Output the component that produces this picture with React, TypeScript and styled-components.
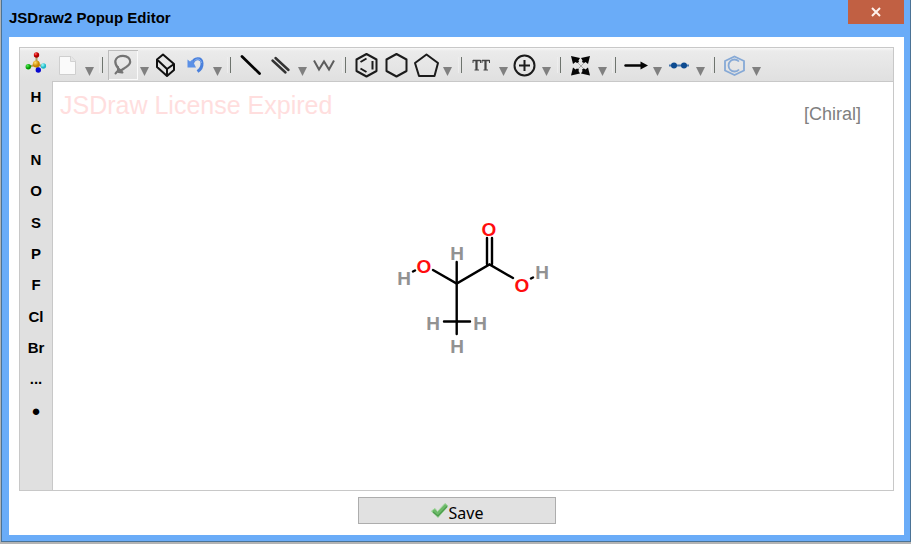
import React from 'react';
import styled, { createGlobalStyle } from 'styled-components';

const GlobalStyle = createGlobalStyle`
  * { box-sizing: border-box; }
  body { margin: 0; background: #b4b4b4; font-family: "Liberation Sans", Arial, sans-serif; }
  button { font: inherit; color: inherit; border: 0; padding: 0; background: none; cursor: pointer; }
`;

const Page = styled.div`
  display: flex;
  min-height: 100vh;
  padding: 0 0 2px 1px;
`;

const Dialog = styled.section`
  flex: 1;
  display: flex;
  flex-direction: column;
  padding: 0 6px 6px 7px;
  background: #6aacf8;
  border: 1px solid #4b7396;
  border-top: 0;
`;

const TitleBar = styled.header`
  display: flex;
  justify-content: space-between;
  align-items: flex-start;
  height: 37px;
`;

const Title = styled.h1`
  margin: 0;
  font-size: 15px;
  line-height: 36px;
  font-weight: bold;
  color: #000;
`;

const CloseButton = styled.button`
  display: grid;
  place-items: center;
  width: 56px;
  height: 24px;
  background: #c16043;
`;

const Body = styled.main`
  flex: 1;
  display: flex;
  flex-direction: column;
  align-items: center;
  gap: 6px;
  padding: 10px 10px 11px;
  background: #fff;
`;

const Editor = styled.div`
  flex: 1;
  align-self: stretch;
  display: flex;
  flex-direction: column;
  border: 1px solid #c8c8c8;
`;

const Toolbar = styled.div`
  display: flex;
  align-items: center;
  height: 33px;
  padding: 0 1px;
  background: linear-gradient(#f8f8f8 0, #ebebeb 3px, #e0e0e0 100%);
`;

const Tool = styled.button<{ $active?: boolean; $spaced?: boolean }>`
  display: block;
  flex: none;
  width: 30px;
  height: 30px;
  margin-right: ${p => (p.$spaced ? 2 : 0)}px;
  box-shadow: ${p => (p.$active ? 'inset 1px 1px #bdbdbd, inset -1px -1px #fafafa' : 'none')};
  svg { display: block; }
`;

const Caret = styled.button`
  display: grid;
  place-items: center;
  align-self: flex-end;
  flex: none;
  width: 13px;
  height: 19px;
  svg { display: block; }
`;

const Separator = styled.span<{ $wide?: boolean }>`
  flex: none;
  display: flex;
  justify-content: center;
  width: ${p => (p.$wide ? 13 : 12)}px;
  height: 16px;
  &::before {
    content: '';
    width: 2px;
    margin-right: 2px;
    border-left: 1px solid #ededed;
    border-right: 1px solid #6e746e;
  }
`;

const Workspace = styled.div`
  flex: 1;
  display: flex;
`;

const Elements = styled.nav`
  flex: none;
  width: 32px;
  background: #e0e0e0;
`;

const ElementGrid = styled.div`
  display: grid;
  grid-auto-rows: 1fr;
  height: 345px;
`;

const ElementButton = styled.button`
  font-size: 15px;
  font-weight: bold;
  color: #000;
`;

const Canvas = styled.div`
  position: relative;
  flex: 1;
  display: grid;
  place-items: center;
  border-top: 1px solid #c8c8c8;
  border-left: 1px solid #c8c8c8;
  background: #fff;
`;

const License = styled.div`
  position: absolute;
  left: 7px;
  top: 8px;
  font-size: 25px;
  line-height: 30px;
  color: #ffdede;
`;

const Chiral = styled.div`
  position: absolute;
  right: 32px;
  top: 21px;
  font-size: 18px;
  line-height: 22px;
  color: #808080;
`;

const Molecule = styled.svg`
  display: block;
  font-family: "Liberation Sans", Arial, sans-serif;
  font-size: 19px;
  font-weight: bold;
  text-anchor: middle;
`;

const SaveButton = styled.button`
  display: flex;
  justify-content: center;
  align-items: center;
  width: 198px;
  height: 27px;
  border: 1px solid #adadad;
  background: #e1e1e1;
  font-family: "Noto Sans", sans-serif;
  font-size: 16px;
  color: #000;
`;

const SaveLabel = styled.span`
  padding-top: 4px;
  line-height: 22px;
`;

const icons: Record<string, React.ReactNode> = {
  molecule: (
    <g>
      <defs>
        <radialGradient id="red" cx=".35" cy=".3"><stop offset="0" stopColor="#ff7777" /><stop offset=".6" stopColor="#d60808" /><stop offset="1" stopColor="#aa0000" /></radialGradient>
        <radialGradient id="gold" cx=".35" cy=".3"><stop offset="0" stopColor="#ffe070" /><stop offset="1" stopColor="#c88600" /></radialGradient>
        <radialGradient id="green" cx=".35" cy=".3"><stop offset="0" stopColor="#55ee55" /><stop offset="1" stopColor="#009a00" /></radialGradient>
        <radialGradient id="cyan" cx=".35" cy=".3"><stop offset="0" stopColor="#a0ffff" /><stop offset="1" stopColor="#20b8c8" /></radialGradient>
      </defs>
      <path d="M15.5 7V15M7.5 17L15 14.5L22 16M15.5 14.5L17 20" stroke="#b09a60" strokeWidth="2" />
      <circle cx="15.5" cy="5" r="2.7" fill="url(#red)" />
      <circle cx="7.3" cy="16.8" r="2.7" fill="url(#green)" />
      <circle cx="22.4" cy="16" r="2.7" fill="url(#cyan)" />
      <circle cx="15.3" cy="14" r="3.5" fill="url(#gold)" />
      <circle cx="17.3" cy="20" r="2.7" fill="#0808d0" />
    </g>
  ),
  page: (
    <g>
      <path d="M6.5 6.5H18L22.5 11V24.5H6.5Z" fill="#fafafa" stroke="#cfcfcf" strokeLinejoin="round" />
      <path d="M17.5 6.5V11.5H22.5" fill="#e7e7e7" stroke="#d2d2d2" />
    </g>
  ),
  lasso: (
    <g fill="none" stroke="#747474" strokeWidth="2.2" strokeLinecap="round" strokeLinejoin="round">
      <path d="M10 18C8.500 16 7 14 7.300 11C7.800 7.500 11.500 5.800 15 5.800C19.500 5.800 22.300 8.500 22.200 12C22 15.500 18.500 16.500 16 18.500C14 20 12.500 21 10.500 20.500" />
      <path d="M10 17V20.500L7.500 23.500M10.500 18.500L14.500 22.500M10.500 22L14 22.500" strokeWidth="2" />
    </g>
  ),
  eraser: (
    <g fill="none" stroke="#111" strokeWidth="2" strokeLinejoin="round">
      <path d="M6 9.500L12 4.500L23 14V20L16 26L6 17ZM6 9.500L16 19L23 14M16 19V26" />
    </g>
  ),
  undo: (
    <g>
      <path d="M11.500 13.500C13 7.500 20.500 7 21 13C21.300 17 19.500 19.500 16.500 21.500" fill="none" stroke="#4a80dc" strokeWidth="3" />
      <path d="M13 11.500C15 8 19.500 8 20.500 13" fill="none" stroke="#85aff0" strokeWidth="1" />
      <path d="M6.500 9.500L9 11.500L11.500 9.500L13 13.500L15 17.500H6.500Z" fill="#5b90e6" />
    </g>
  ),
  bond: <path d="M6 6.500L23.500 23.500" stroke="#050505" strokeWidth="2.800" strokeLinecap="round" />,
  doubleBond: <path d="M6.500 10.500L19.500 22.500M9.500 8L22.500 20" stroke="#333" strokeWidth="2.400" strokeLinecap="round" />,
  chain: <path d="M5 10.500L10 19.500L15 11.500L20 19.500L25 10.500" fill="none" stroke="#5d5d5d" strokeWidth="2" />,
  benzene: (
    <g fill="none" stroke="#1b1b1b" strokeWidth="2" strokeLinejoin="round">
      <path d="M15.500 4L25.500 9.500V21L15.500 26.500L5.500 21V9.500Z" />
      <path d="M21.500 11V19.500M9.500 12L15.500 8.500M9.500 18.500L15.500 22" />
    </g>
  ),
  hexagon: <path d="M15.500 4L25.500 9.500V21L15.500 26.500L5.500 21V9.500Z" fill="none" stroke="#1b1b1b" strokeWidth="2" strokeLinejoin="round" />,
  pentagon: <path d="M15.500 4.500L27 13L23.500 26H8L4 13Z" fill="none" stroke="#1b1b1b" strokeWidth="2" strokeLinejoin="round" />,
  text: (
    <g fill="none" stroke="#444">
      <path d="M6 10.500H13.500M15 10.500H22.500" strokeWidth="1.500" />
      <path d="M9.500 10V20M18.500 10V20" strokeWidth="2.200" />
      <path d="M6 10V13M13.500 10V13M15 10V13M22.500 10V13M7.500 20H12M16.500 20H21" strokeWidth="1" />
    </g>
  ),
  charge: (
    <g fill="none" stroke="#1b1b1b" strokeWidth="2">
      <circle cx="14.500" cy="15.500" r="10" />
      <path d="M9 15.500H20M14.500 10V21" />
    </g>
  ),
  expand: (
    <g>
      <path d="M8 9L22 23M22 9L8 23" stroke="#aaa" strokeWidth="1" />
      <path d="M5 6L14 8L12.500 10.500L13 12L11 13L9.500 12L7 14ZM24 6L15 8L16.500 10.500L16 12L18 13L19.500 12L22 14ZM5 25.500L14 23.500L12.500 21L13 19.500L11 18.500L9.500 19.500L7 17.500ZM24 25.500L15 23.500L16.500 21L16 19.500L18 18.500L19.500 19.500L22 17.500Z" fill="#050505" />
    </g>
  ),
  arrow: (
    <g>
      <path d="M4.500 15.500H22" stroke="#050505" strokeWidth="2.400" strokeLinecap="round" />
      <path d="M19.500 11.500L27 15.500L19.500 19.500Z" fill="#050505" />
    </g>
  ),
  dots: (
    <g fill="#0d4b91">
      <path d="M5 15.500H25" stroke="#4a78ad" strokeWidth="2" />
      <circle cx="10" cy="15.500" r="3" />
      <circle cx="20" cy="15.500" r="3" />
    </g>
  ),
  structure: (
    <g fill="none" stroke="#86a9d6">
      <path d="M14.500 6.500L24 11V20.500L14.500 25L5 20.500V11Z" strokeWidth="1.800" />
      <path d="M19 11.500A6 6 0 1 0 19 19.500" strokeWidth="1.800" />
    </g>
  ),
};

type Item = { kind: 'tool'; icon: string; label: string; active?: boolean; spaced?: boolean } | { kind: 'caret'; label: string } | { kind: 'sep'; wide?: boolean };

const items: Item[] = [
  { kind: 'tool', icon: 'molecule', label: 'About', spaced: true },
  { kind: 'tool', icon: 'page', label: 'New' },
  { kind: 'caret', label: 'New options' },
  { kind: 'sep' },
  { kind: 'tool', icon: 'lasso', label: 'Lasso select', active: true },
  { kind: 'caret', label: 'Select options' },
  { kind: 'tool', icon: 'eraser', label: 'Erase' },
  { kind: 'tool', icon: 'undo', label: 'Undo' },
  { kind: 'caret', label: 'Undo options' },
  { kind: 'sep' },
  { kind: 'tool', icon: 'bond', label: 'Single bond' },
  { kind: 'tool', icon: 'doubleBond', label: 'Double bond' },
  { kind: 'caret', label: 'Bond options' },
  { kind: 'tool', icon: 'chain', label: 'Chain' },
  { kind: 'sep' },
  { kind: 'tool', icon: 'benzene', label: 'Benzene' },
  { kind: 'tool', icon: 'hexagon', label: 'Cyclohexane' },
  { kind: 'tool', icon: 'pentagon', label: 'Cyclopentane' },
  { kind: 'caret', label: 'Ring options' },
  { kind: 'sep', wide: true },
  { kind: 'tool', icon: 'text', label: 'Text' },
  { kind: 'caret', label: 'Text options' },
  { kind: 'tool', icon: 'charge', label: 'Charge' },
  { kind: 'caret', label: 'Charge options' },
  { kind: 'sep', wide: true },
  { kind: 'tool', icon: 'expand', label: 'Fit' },
  { kind: 'caret', label: 'Fit options' },
  { kind: 'sep' },
  { kind: 'tool', icon: 'arrow', label: 'Arrow' },
  { kind: 'caret', label: 'Arrow options' },
  { kind: 'tool', icon: 'dots', label: 'Link' },
  { kind: 'caret', label: 'Link options' },
  { kind: 'sep', wide: true },
  { kind: 'tool', icon: 'structure', label: 'Structure' },
  { kind: 'caret', label: 'Structure options' },
];

const elements = ['H', 'C', 'N', 'O', 'S', 'P', 'F', 'Cl', 'Br', '...', '●'];

const hydrogens = [[64, 44], [11, 69], [149, 63], [40, 114], [87, 114], [64, 137]];
const oxygens = [[96, 20], [31, 57], [129, 76]];

function ToolbarItem({ item }: { item: Item }) {
  if (item.kind === 'sep') return <Separator $wide={item.wide} />;
  if (item.kind === 'caret') {
    return (
      <Caret aria-label={item.label}>
        <svg width="9" height="9" viewBox="0 0 9 9"><path d="M0 0H9L4.500 9Z" fill="#808080" /></svg>
      </Caret>
    );
  }
  return (
    <Tool aria-label={item.label} $active={item.active} $spaced={item.spaced}>
      <svg width="30" height="30" viewBox="0 0 30 30" fill="none">{icons[item.icon]}</svg>
    </Tool>
  );
}

export default function App() {
  return (
    <>
      <GlobalStyle />
      <Page>
        <Dialog role="dialog" aria-labelledby="title">
          <TitleBar>
            <Title id="title">JSDraw2 Popup Editor</Title>
            <CloseButton aria-label="Close">
              <svg width="12" height="10" viewBox="0 0 12 10"><path d="M2 1L10 9M10 1L2 9" stroke="#fff2ec" strokeWidth="2" /></svg>
            </CloseButton>
          </TitleBar>
          <Body>
            <Editor>
              <Toolbar role="toolbar">
                {items.map((item, i) => <ToolbarItem key={i} item={item} />)}
              </Toolbar>
              <Workspace>
                <Elements aria-label="Elements">
                  <ElementGrid>
                    {elements.map(e => <ElementButton key={e}>{e}</ElementButton>)}
                  </ElementGrid>
                </Elements>
                <Canvas>
                  <License>JSDraw License Expired</License>
                  <Chiral>[Chiral]</Chiral>
                  <Molecule width="160" height="140" viewBox="0 0 160 140" role="img" aria-label="Lactic acid">
                    <g stroke="#000" strokeWidth="2.400" strokeLinecap="round" fill="none">
                      <path d="M40 54L63.700 67.500L96.500 48.500L120 62" />
                      <path d="M63.700 46V118M51 105.500H77M94 22V48M99 22V48" />
                      <path d="M20 55.500L22 54.500M138 62.500L140 61.500" />
                    </g>
                    <g fill="#929292">{hydrogens.map(([x, y]) => <text key={`${x}-${y}`} x={x} y={y}>H</text>)}</g>
                    <g fill="#ff0d0d">{oxygens.map(([x, y]) => <text key={`${x}-${y}`} x={x} y={y}>O</text>)}</g>
                  </Molecule>
                </Canvas>
              </Workspace>
            </Editor>
            <SaveButton>
              <svg width="19" height="17" viewBox="0 0 19 17">
                <path d="M1.500 9L5 6.500L7.500 9.500L15 1.500L18 4L8 15.500Z" fill="#6cba69" stroke="#9fd49a" strokeLinejoin="round" />
                <path d="M3 10L8 14L17 4.500" fill="none" stroke="#4c9c4c" strokeWidth="1.200" />
              </svg>
              <SaveLabel>Save</SaveLabel>
            </SaveButton>
          </Body>
        </Dialog>
      </Page>
    </>
  );
}
